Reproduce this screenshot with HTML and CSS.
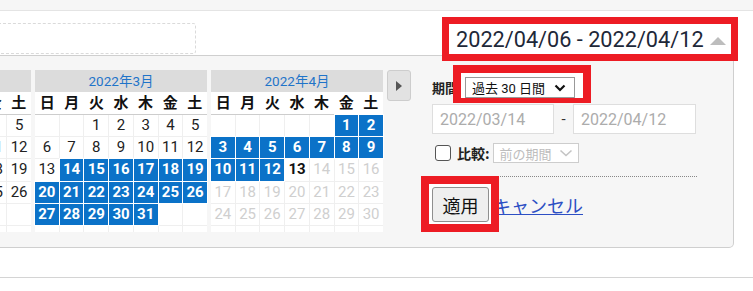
FILE: index.html
```html
<!DOCTYPE html>
<html lang="ja">
<head>
  <meta charset="UTF-8">
  <meta name="viewport" content="width=device-width, initial-scale=1.0">
  <title>期間の選択</title>
  <link rel="stylesheet" href="styles.css">
</head>
<body>
  <div class="topbar"></div>

  <div class="toolbar">
    <div class="dropzone"></div>
    <button class="range-toggle" type="button">
      <span>2022/04/06 - 2022/04/12</span>
      <span class="caret-up"></span>
    </button>
  </div>

  <div class="picker">
    <div class="calendars" id="calendars">
      <button class="next-month" type="button"><span></span></button>
    </div>

    <form class="range-form">
      <div class="period-row">
        <span class="field-label">期間</span>
        <span class="mark mark-period">
          <span class="select">
            <span>過去 30 日間</span>
            <svg width="12" height="8" viewBox="0 0 12 8"><polyline points="1.5,1.5 6,6 10.5,1.5" fill="none" stroke="#111" stroke-width="2.2"/></svg>
          </span>
        </span>
      </div>

      <div class="dates-row">
        <input class="date-input" value="2022/03/14" readonly>
        <span class="dash">-</span>
        <input class="date-input date-input-end" value="2022/04/12" readonly>
      </div>

      <div class="compare-row">
        <span class="checkbox"></span>
        <span class="field-label compare-label">比較:</span>
        <span class="select select-disabled">
          <span>前の期間</span>
          <svg width="14" height="8" viewBox="0 0 14 8"><polyline points="1.5,1.5 7,6.5 12.5,1.5" fill="none" stroke="#c4c4c4" stroke-width="1.6"/></svg>
        </span>
      </div>

      <div class="rule"></div>

      <div class="actions-row">
        <span class="mark mark-apply">
          <button class="apply" type="button">適用</button>
        </span>
        <a class="cancel" href="#">キャンセル</a>
      </div>
    </form>
  </div>

  <div class="divider"></div>

  <script>
    const months = [
      { year: 2022, month: 2 },
      { year: 2022, month: 3 },
      { year: 2022, month: 4 }
    ];
    const weekDays = ["日", "月", "火", "水", "木", "金", "土"];
    const rangeStart = new Date(2022, 2, 14);
    const rangeEnd = new Date(2022, 3, 12);
    const today = new Date(2022, 3, 13);

    const buildMonth = ({ year, month }) => {
      const el = document.createElement("div");
      el.className = "month";
      const first = new Date(year, month - 1, 1).getDay();
      const count = new Date(year, month, 0).getDate();

      let html = '<div class="month-title">' + year + '年' + month + '月</div>';
      html += '<div class="dow">' + weekDays.map(d => '<span>' + d + '</span>').join("") + '</div>';
      html += '<div class="days">';
      for (let i = 0; i < 42; i++) {
        const day = i - first + 1;
        if (day < 1 || day > count) {
          html += '<span></span>';
          continue;
        }
        const date = new Date(year, month - 1, day);
        let cls = "";
        if (date >= rangeStart && date <= rangeEnd) cls = "in-range";
        else if (date.getTime() === today.getTime()) cls = "today";
        else if (date > today) cls = "future";
        html += '<span class="' + cls + '">' + day + '</span>';
      }
      html += '</div>';
      el.innerHTML = html;
      return el;
    };

    const calendars = document.getElementById("calendars");
    const nextButton = calendars.querySelector(".next-month");
    months.forEach(m => calendars.insertBefore(buildMonth(m), nextButton));
  </script>
</body>
</html>
```

FILE: styles.css
```css
body {
  margin: 0;
  width: 753px;
  font-family: Roboto, "Noto Sans CJK JP", sans-serif;
  color: #222;
  background: #fff;
  overflow: hidden;
}

/* Top strip */
.topbar {
  height: 10px;
  background: #f6f6f6;
  border-bottom: 1px solid #e4e4e4;
}

/* Toolbar with the range toggle */
.toolbar {
  height: 44px;
  display: flex;
  justify-content: space-between;
  align-items: flex-start;
}

.dropzone {
  width: 206px;
  height: 31px;
  margin: 12px 0 0 -10px;
  border: 1px dashed #dadada;
  border-radius: 3px;
  box-sizing: border-box;
}

.range-toggle {
  position: relative; /* sits over the picker's top edge */
  z-index: 1;
  top: 6px;
  margin-right: 15px;
  width: 296px;
  height: 44px;
  box-sizing: border-box;
  border: 7px solid #ed1c24;
  background: #fff;
  display: flex;
  align-items: center;
  justify-content: space-between;
  padding: 0 5px 0 7px;
  font-family: Roboto, sans-serif;
  font-size: 21.7px;
  color: #1e2838;
  cursor: pointer;
}

.caret-up {
  width: 0;
  height: 0;
  border-left: 8px solid transparent;
  border-right: 8px solid transparent;
  border-bottom: 8px solid #bdbdbd;
  margin-top: 3px;
}

/* Picker panel */
.picker {
  width: 734px;
  box-sizing: border-box;
  display: flex;
  align-items: flex-start;
  background: #f6f6f6;
  border: 1px solid #cfcfcf;
  border-left: 0;
  border-radius: 0 0 5px 0;
  padding: 14px 0 15px;
}

.calendars {
  display: flex;
  align-items: flex-start;
  gap: 4px;
  margin-left: -141px;
  height: 162px;
  overflow: hidden;
  flex-shrink: 0;
}

.month {
  width: 172px;
  background: #fff;
}

.month-title {
  height: 22px;
  line-height: 22px;
  background: #dcdcdc;
  color: #1f74c9;
  text-align: center;
  font-size: 13.5px;
}

.dow {
  display: grid;
  grid-template-columns: repeat(7, 1fr);
  height: 22px;
  border-bottom: 1px solid #cdcdcd;
}

.dow span {
  text-align: center;
  line-height: 22px;
  font-size: 15px;
  font-weight: 700;
  color: #111;
}

.days {
  display: grid;
  grid-template-columns: repeat(7, 1fr);
  grid-auto-rows: 21.2px;
  gap: 1px;
  background: #efefef;
}

.days span {
  background: #fff;
  text-align: center;
  line-height: 21px;
  font-size: 15px;
  color: #222;
}

.days .in-range {
  background: #0b72c8;
  color: #fff;
  font-weight: 700;
  box-shadow: 0 0 0 1px #fff;
}

.days .today {
  font-weight: 700;
  color: #111;
}

.days .future {
  color: #cfcfcf;
}

.next-month {
  width: 24px;
  height: 31px;
  padding: 0;
  background: #e2e2e2;
  border: 1px solid #cdcdcd;
  border-radius: 3px;
  display: flex;
  align-items: center;
  justify-content: center;
  flex-shrink: 0;
}

.next-month span {
  width: 0;
  height: 0;
  border-top: 5px solid transparent;
  border-bottom: 5px solid transparent;
  border-left: 6px solid #555;
}

/* Range form */
.range-form {
  margin: 7px 0 0 21px;
  width: 265px;
  display: flex;
  flex-direction: column;
}

.period-row {
  display: flex;
  align-items: center;
  height: 21px;
}

.field-label {
  font-family: "Noto Sans CJK JP", sans-serif;
  font-weight: 700;
  font-size: 13px;
  color: #222;
  margin-right: 7px;
}

.select {
  display: flex;
  align-items: center;
  justify-content: space-between;
  width: 110px;
  height: 21px;
  box-sizing: border-box;
  border: 1px solid #999;
  background: #fff;
  padding: 0 8px 0 6px;
  font-size: 13px;
  color: #111;
}

/* Red annotation boxes */
.mark {
  position: relative;
  z-index: 0;
  display: inline-block;
}

.mark::before {
  content: "";
  position: absolute;
  z-index: -1;
  border: 8px solid #ed1c24;
  background: #fff;
}

.mark-period::before {
  top: -12px;
  left: -12px;
  right: -16px;
  bottom: -5px;
  border-bottom-width: 5px;
}

.mark-apply::before {
  top: -11px;
  left: -11px;
  right: -10px;
  bottom: -10px;
}

.dates-row {
  display: flex;
  align-items: center;
  margin-top: 6px;
}

.date-input {
  width: 122px;
  height: 30px;
  box-sizing: border-box;
  border: 1px solid #dedede;
  background: #fff;
  padding: 0 7px;
  font-family: Roboto, sans-serif;
  font-size: 16px;
  color: #acacac;
  outline: none;
}

.date-input-end {
  width: 123px;
}

.dash {
  width: 19px;
  text-align: center;
  font-size: 15px;
  color: #333;
}

.compare-row {
  display: flex;
  align-items: center;
  height: 20px;
  margin-top: 9px;
}

.checkbox {
  width: 16px;
  height: 16px;
  box-sizing: border-box;
  margin-left: 3px;
  border: 1.5px solid #555;
  border-radius: 3px;
  background: #fff;
}

.compare-label {
  font-size: 14px;
  margin: 0 3px 0 6px;
}

.select-disabled {
  width: 86px;
  height: 20px;
  border-color: #cdcdcd;
  color: #bdbdbd;
  padding: 0 5px 0 6px;
}

.rule {
  margin-top: 13px;
  border-top: 1px dotted #888;
}

.actions-row {
  display: flex;
  align-items: center;
  margin-top: 10px;
}

.apply {
  width: 57px;
  height: 35px;
  padding: 0;
  background: #efefef;
  border: 1px solid #8f8f8f;
  border-radius: 3px;
  font-family: "Noto Sans CJK JP", sans-serif;
  font-size: 18px;
  color: #111;
  display: block;
}

.cancel {
  margin-left: 4px;
  font-family: "Noto Sans CJK JP", sans-serif;
  font-size: 18px;
  color: #2d4fc4;
  text-decoration: underline;
}

/* Bottom rule */
.divider {
  margin-top: 29px;
  border-top: 1px solid #d4d4d4;
}
```
